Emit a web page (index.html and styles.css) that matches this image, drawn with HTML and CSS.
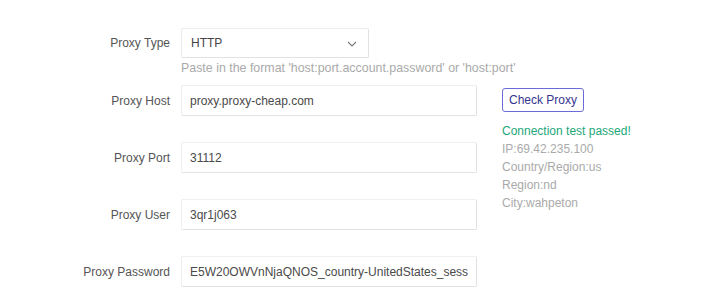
FILE: index.html
```html
<!DOCTYPE html>
<html lang="en">
<head>
    <meta charset="UTF-8">
    <meta name="viewport" content="width=device-width, initial-scale=1.0">
    <title>Proxy Settings</title>
    <link rel="stylesheet" href="styles.css">
</head>
<body>
    <div class="proxy-form">
        <label class="label">Proxy Type</label>
        <div class="field">
            <div class="select">
                <span>HTTP</span>
                <svg class="chevron" width="10" height="6" viewBox="0 0 10 6">
                    <path d="M1 1 L5 5 L9 1" fill="none" stroke="#777" stroke-width="1.1"/>
                </svg>
            </div>
        </div>

        <div class="label"></div>
        <div class="field hint">Paste in the format 'host:port.account.password' or 'host:port'</div>

        <label class="label row-label">Proxy Host</label>
        <div class="field row-field"><input class="input" type="text" value="proxy.proxy-cheap.com"></div>

        <div class="side">
            <button class="check-btn">Check Proxy</button>
            <div class="status">
                <div class="ok">Connection test passed!</div>
                <div>IP:69.42.235.100</div>
                <div>Country/Region:us</div>
                <div>Region:nd</div>
                <div>City:wahpeton</div>
            </div>
        </div>

        <label class="label row-label gap">Proxy Port</label>
        <div class="field row-field gap"><input class="input" type="text" value="31112"></div>

        <label class="label row-label gap">Proxy User</label>
        <div class="field row-field gap"><input class="input" type="text" value="3qr1j063"></div>

        <label class="label row-label gap">Proxy Password</label>
        <div class="field row-field gap"><input class="input" type="text" value="E5W20OWVnNjaQNOS_country-UnitedStates_session-k8Xq2Lp"></div>
    </div>
</body>
</html>
```

FILE: styles.css
```css
* {
    margin: 0;
    padding: 0;
    box-sizing: border-box;
}
body {
    background-color: #fff;
    font-family: "Liberation Sans", Arial, sans-serif;
    font-size: 12px;
    color: #555;
}
.proxy-form {
    display: grid;
    grid-template-columns: 181px 296px 1fr;
    padding-top: 28px;
}
.label {
    grid-column: 1;
    text-align: right;
    padding-right: 11px;
    color: #555;
    display: flex;
    align-items: center;
    justify-content: flex-end;
}
.field {
    grid-column: 2;
}
.select {
    width: 188px;
    height: 30px;
    border: 1px solid #ececec;
    border-right-color: #e2e2e2;
    border-bottom-color: #e2e2e2;
    border-radius: 2px;
    display: flex;
    align-items: center;
    justify-content: space-between;
    padding: 0 11px 0 9px;
    color: #444;
}
.chevron {
    margin-top: 1px;
}
.hint {
    margin-top: 3px;
    line-height: 15px;
    font-size: 12.4px;
    color: #aaa;
    white-space: nowrap;
}
.row-label {
    margin-top: 9px;
}
.row-field {
    margin-top: 9px;
}
.gap {
    margin-top: 26px;
}
.input {
    width: 296px;
    height: 31px;
    border: 1px solid #efefef;
    border-right-color: #e2e2e2;
    border-bottom-color: #e2e2e2;
    border-radius: 2px;
    padding: 0 8px;
    font-family: "Liberation Sans", Arial, sans-serif;
    font-size: 12px;
    color: #4a4a4a;
    background-color: #fff;
    outline: none;
}
.side {
    grid-column: 3;
    grid-row: 3 / span 4;
    padding-left: 25px;
    margin-top: 12px;
}
.check-btn {
    width: 82px;
    height: 24px;
    border: 1px solid #6b6bd8;
    border-radius: 3px;
    background-color: #fff;
    color: #35358f;
    font-family: "Liberation Sans", Arial, sans-serif;
    font-size: 12px;
    cursor: pointer;
}
.status {
    margin-top: 10px;
    line-height: 18px;
    color: #aaa;
}
.ok {
    color: #1ea77a;
}
```
